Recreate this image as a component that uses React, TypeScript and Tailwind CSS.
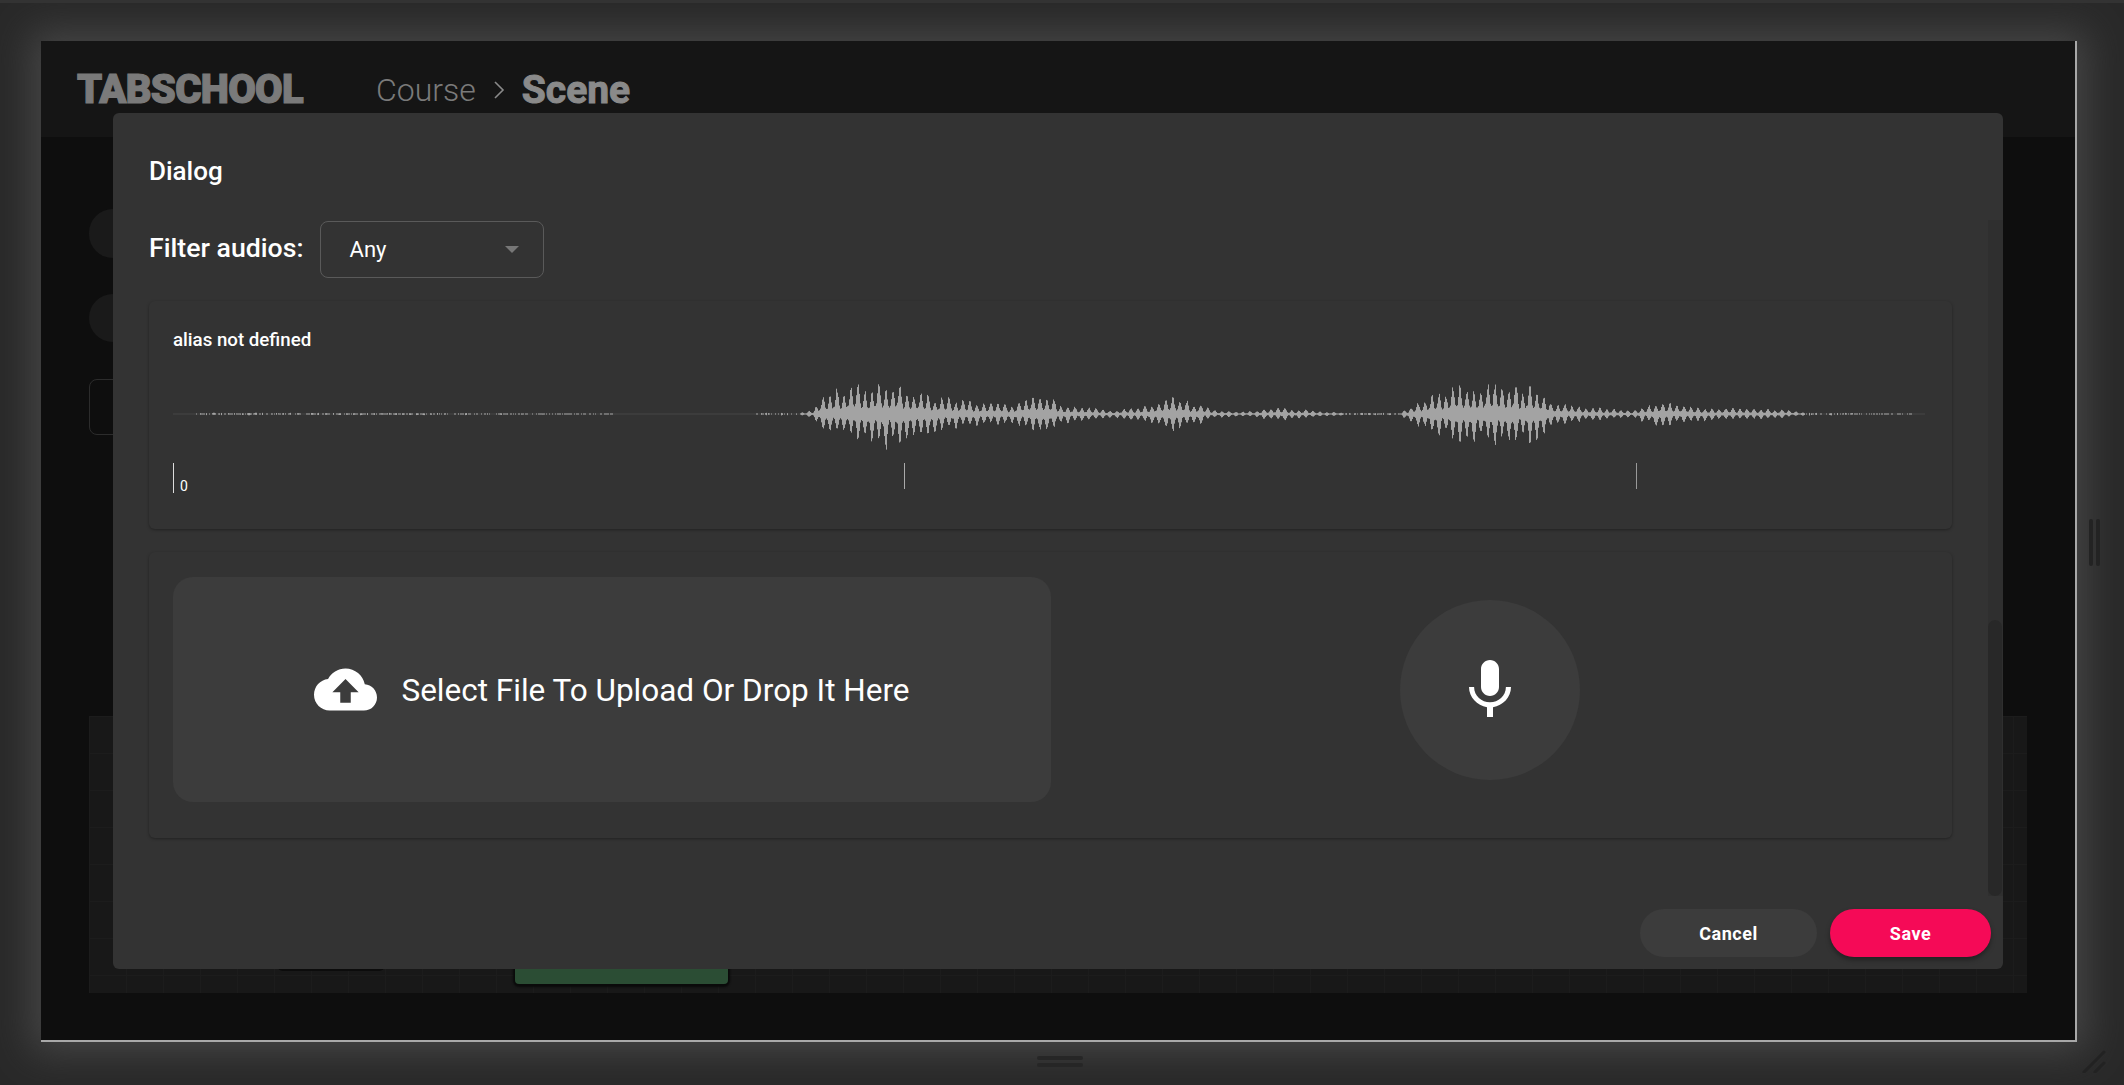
import React from 'react';

const font = { fontFamily: 'Roboto, sans-serif' };

// envelope of the clip: [x, amplitude] in page pixels
const envelope: [number, number][] = [
    [173, 0], [195, 0], [200, 1.4], [480, 1.2], [560, 0.6], [640, 0], [750, 0], [756, 1.6], [800, 1.6], [812, 5],
    [825, 24], [850, 32], [872, 40], [895, 38], [915, 24], [935, 22], [975, 15], [1010, 12], [1043, 22], [1072, 9], [1115, 4],
    [1150, 12], [1172, 20], [1195, 14], [1215, 4], [1250, 3], [1280, 8], [1322, 3], [1358, 1.2], [1400, 1.5], [1416, 14],
    [1445, 28], [1472, 34], [1510, 36], [1534, 32], [1552, 14], [1600, 7], [1631, 4], [1660, 16], [1690, 9], [1717, 7],
    [1774, 6], [1803, 2], [1860, 1], [1925, 0],
];

function amplitudeAt(x: number) {
    for (let i = 1; i < envelope.length; i++) {
        const [x0, a0] = envelope[i - 1];
        const [x1, a1] = envelope[i];
        if (x <= x1) return a0 + (a1 - a0) * ((x - x0) / (x1 - x0));
    }
    return 0;
}

function noise(n: number) {
    const s = Math.sin(n * 12.9898) * 43758.5453;
    return s - Math.floor(s);
}

function buildWave() {
    let d = '';
    for (let x = 173; x < 1925; x += 1) {
        const amp = amplitudeAt(x);
        if (amp < 0.2) continue;
        // quiet parts are only specks, loud parts are uneven spikes about 7px apart
        if (amp < 2 && noise(x + 90) < 0.45) continue;
        const s = Math.abs(Math.sin((x * Math.PI) / 7));
        const pitch = 0.28 + 0.72 * s * s * s;
        const up = Math.max(0.5, amp * pitch * (0.6 + 0.4 * noise(Math.floor(x / 7))) * (0.8 + 0.2 * noise(x)));
        const down = Math.max(0.5, amp * pitch * (0.6 + 0.4 * noise(Math.floor(x / 7) + 500)) * (0.8 + 0.2 * noise(x + 70)));
        d += `M${x - 173 + 0.5} ${40 - up}V${40 + down}`;
    }
    return d;
}

function Waveform() {
    return (
        <svg width="1752" height="80" viewBox="0 0 1752 80" className="mt-6 block">
            <line x1="0" y1="40" x2="1752" y2="40" stroke="#474747" strokeWidth="1" />
            <path d={buildWave()} stroke="#a3a3a3" strokeWidth="1" fill="none" />
        </svg>
    );
}

function CloudUpload() {
    return (
        <svg width="63" height="63" viewBox="0 0 24 24" fill="#fff">
            <path d="M19.35 10.04C18.67 6.59 15.64 4 12 4 9.11 4 6.6 5.64 5.35 8.04 2.34 8.36 0 10.91 0 14c0 3.31 2.69 6 6 6h13c2.76 0 5-2.24 5-5 0-2.64-2.05-4.78-4.65-4.96zM14 13v4h-4v-4H7l5-5 5 5h-3z" />
        </svg>
    );
}

function Mic() {
    return (
        <svg width="72" height="72" viewBox="0 0 24 24" fill="#fff">
            <path d="M12 14c1.66 0 3-1.34 3-3V5c0-1.66-1.34-3-3-3S9 3.34 9 5v6c0 1.66 1.34 3 3 3zm5.3-3c0 3-2.54 5.1-5.3 5.1S6.7 14 6.7 11H5c0 3.41 2.72 6.23 6 6.72V21h2v-3.28c3.28-.48 6-3.3 6-6.72h-1.7z" />
        </svg>
    );
}

function PageBehind() {
    return (
        <div className="flex h-[1001px] w-[2036px] flex-col border-r-2 border-b-2 border-[#a8a8a8] shadow-[0_0_36px_10px_#464646]">
            <div className="flex h-[96px] shrink-0 items-center bg-[#151515] pt-[2px] pl-9 text-[#7a7a7a]">
                <span className="w-[299px] text-[40px] leading-none font-black tracking-[-0.7px] [-webkit-text-stroke:1.2px_#7a7a7a]">TABSCHOOL</span>
                <span className="text-[32px] leading-none font-light">Course</span>
                <svg width="12" height="18" viewBox="0 0 12 18" className="mx-[17px]" fill="none" stroke="#8a8a8a" strokeWidth="1.6">
                    <path d="M2 1l8 8-8 8" />
                </svg>
                <span className="text-[39px] leading-none font-bold text-[#8a8a8a] [-webkit-text-stroke:1px_#8a8a8a]">Scene</span>
            </div>
            <div className="flex flex-1 flex-col bg-[#0e0e0e] px-12 pt-[72px]">
                <div className="h-[49px] w-20 rounded-3xl bg-[#1a1a1a]" />
                <div className="mt-9 h-12 w-20 rounded-3xl bg-[#1a1a1a]" />
                <div className="mt-[37px] h-14 w-40 rounded-lg border border-[#2c2c2c]" />
                <div className="relative mt-[281px] h-[277px] bg-[#181818] bg-[linear-gradient(#1c1c1c_1px,transparent_1px),linear-gradient(90deg,#1c1c1c_1px,transparent_1px)] bg-[size:37px_37px]">
                    <div className="absolute top-[190px] left-[188px] h-[65px] w-[108px] rounded-md bg-[#0c0c0c]" />
                    <div className="absolute top-[190px] left-[426px] h-[78px] w-[213px] rounded-sm bg-[#2b4d34] shadow-[0_1px_2px_2px_#0a0a0a]" />
                </div>
            </div>
        </div>
    );
}

function Dialog() {
    return (
        <div className="absolute top-[110px] left-[113px] flex h-[856px] w-[1890px] flex-col rounded-md bg-[#333] text-white">
            <div className="h-[108px] shrink-0 pt-[44px] pl-9 text-[26px] leading-7 font-medium">Dialog</div>

            <div className="flex h-[57px] shrink-0 items-center gap-[16px] pl-9">
                <span className="pb-[3px] text-[26.7px] leading-7 font-medium">Filter audios:</span>
                <div className="flex h-[57px] w-[224px] items-center justify-between rounded-lg border border-[#5a5a5a] pr-[24px] pl-[29px] text-[22px]">
                    <span>Any</span>
                    <span className="h-0 w-0 border-x-[7px] border-t-[7px] border-x-transparent border-t-[#777]" />
                </div>
            </div>

            <div className="mt-[23px] mr-[51px] ml-9 h-[228px] shrink-0 rounded-md px-[24px] pt-[29px] shadow-[0_1px_3px_rgba(0,0,0,0.35)]">
                <div className="text-[18.7px] leading-5 font-medium">alias not defined</div>
                <Waveform />
                <div className="mt-[9px] flex h-[29px]">
                    <div className="flex h-[30px] w-[731px] items-end border-l border-[#ddd] pl-[6px] text-[14px] leading-[13px]">0</div>
                    <div className="h-[26px] w-[732px] border-l border-[#aaa]" />
                    <div className="h-[26px] border-l border-[#999]" />
                </div>
            </div>

            <div className="mt-[23px] mr-[51px] ml-9 flex h-[286px] shrink-0 rounded-md px-[24px] pt-[25px] shadow-[0_1px_3px_rgba(0,0,0,0.35)]">
                <div className="flex h-[225px] w-[878px] items-center justify-center gap-6 rounded-[20px] bg-[#3c3c3c]">
                    <CloudUpload />
                    <span className="pt-[2px] text-[31.5px] leading-none">Select File To Upload Or Drop It Here</span>
                </div>
                <div className="flex h-[225px] flex-1 items-center justify-center">
                    <div className="flex h-[180px] w-[180px] items-center justify-center rounded-full bg-[#3c3c3c]">
                        <Mic />
                    </div>
                </div>
            </div>

            <div className="mt-auto flex justify-end gap-[13px] pr-3 pb-3">
                <button className="h-12 w-[177px] rounded-3xl bg-[#3c3c3c] text-[18px] font-bold tracking-[0.5px]">Cancel</button>
                <button className="h-12 w-[161px] rounded-3xl bg-[#f50a57] text-[18px] font-bold tracking-[0.5px] shadow-[0_3px_5px_rgba(0,0,0,0.35)]">Save</button>
            </div>

            {/* scrollbar */}
            <div className="absolute top-[107px] right-0 h-[676px] w-[15px] bg-[#2f2f2f]">
                <div className="absolute bottom-0 h-[276px] w-[14px] rounded-full bg-[#282828]" />
            </div>
        </div>
    );
}

export default function App() {
    return (
        <div className="relative h-[1085px] w-[2124px] overflow-hidden border-t-[3px] border-[#333] bg-[#292929] pt-[38px] pl-[41px]" style={font}>
            <PageBehind />
            <Dialog />

            {/* right drag handle */}
            <div className="absolute top-[516px] left-[2089px] flex gap-[3px]">
                <div className="h-[47px] w-[4px] rounded-sm bg-[#232323]" />
                <div className="h-[47px] w-[4px] rounded-sm bg-[#232323]" />
            </div>
            {/* bottom drag handle */}
            <div className="absolute top-[1053px] left-[1037px] flex flex-col gap-[3px]">
                <div className="h-[4px] w-[46px] rounded-sm bg-[#262626]" />
                <div className="h-[4px] w-[46px] rounded-sm bg-[#262626]" />
            </div>
            {/* resize corner */}
            <svg width="24" height="24" viewBox="0 0 24 24" className="absolute top-[1046px] left-[2082px]" stroke="#222" strokeWidth="3" strokeLinecap="round">
                <path d="M2 23L22 3M13 23L22 14" />
            </svg>
        </div>
    );
}
